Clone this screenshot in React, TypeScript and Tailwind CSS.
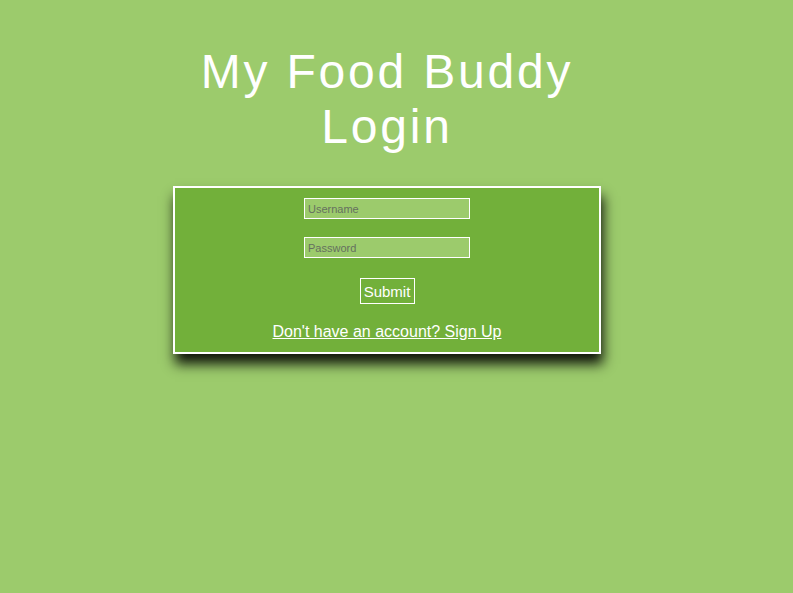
export default function App() {
  return (
    <div className="min-h-[593px] w-full bg-[#9ccb6c]" style={{ fontFamily: '"Liberation Sans", Arial, sans-serif' }}>
      <div className="w-[774px] pt-[44px] flex flex-col items-center">
        <h1 className="text-[48px] leading-[55px] tracking-[2.8px] text-white font-normal text-center">
          My Food Buddy
          <br />
          Login
        </h1>

        <form
          className="mt-[32px] w-[428px] border-2 border-white bg-[#72b03a] flex flex-col items-center pt-[10px] pb-[11px] shadow-[2px_10px_12px_rgba(0,0,0,0.9)]"
          onSubmit={(e) => e.preventDefault()}
        >
          <input
            type="text"
            placeholder="Username"
            className="w-[166px] h-[21px] border border-white bg-[#9ccb6c] px-[3px] text-[11px] text-[#555] placeholder:text-[#65705f] outline-none"
          />
          <input
            type="password"
            placeholder="Password"
            className="mt-[18px] w-[166px] h-[21px] border border-white bg-[#9ccb6c] px-[3px] text-[11px] text-[#555] placeholder:text-[#65705f] outline-none"
          />
          <button
            type="submit"
            className="mt-[20px] w-[55px] h-[26px] border border-white text-white text-[15px] leading-none"
          >
            Submit
          </button>
          <a href="#" className="mt-[19px] text-white text-[16px] leading-[18px] underline">
            Don&apos;t have an account? Sign Up
          </a>
        </form>
      </div>
    </div>
  );
}
